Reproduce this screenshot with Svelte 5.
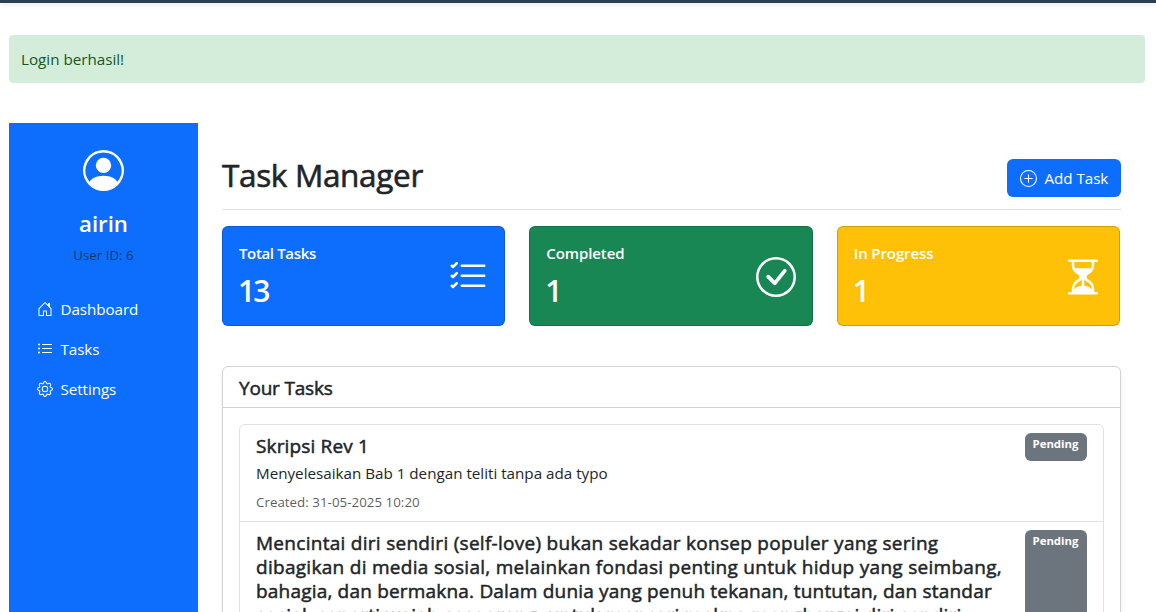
<script>
  const navItems = [
    { label: 'Dashboard', icon: 'house' },
    { label: 'Tasks', icon: 'list' },
    { label: 'Settings', icon: 'gear' }
  ];
  const stats = [
    { label: 'Total Tasks', value: 13, tone: 'blue', icon: 'check2' },
    { label: 'Completed', value: 1, tone: 'green', icon: 'circle' },
    { label: 'In Progress', value: 1, tone: 'yellow', icon: 'hourglass' }
  ];
  const icons = {
    house: ['M8.354 1.146a.5.5 0 0 0-.708 0l-6 6A.5.5 0 0 0 1.5 7.5v7a.5.5 0 0 0 .5.5h4.5a.5.5 0 0 0 .5-.5v-4h2v4a.5.5 0 0 0 .5.5H14a.5.5 0 0 0 .5-.5v-7a.5.5 0 0 0-.146-.354L13 5.793V2.5a.5.5 0 0 0-.5-.5h-1a.5.5 0 0 0-.5.5v1.293zM2.5 14V7.707l5.5-5.5 5.5 5.5V14H10v-4a.5.5 0 0 0-.5-.5h-3a.5.5 0 0 0-.5.5v4z'],
    list: ['M5 11.5a.5.5 0 0 1 .5-.5h9a.5.5 0 0 1 0 1h-9a.5.5 0 0 1-.5-.5m0-4a.5.5 0 0 1 .5-.5h9a.5.5 0 0 1 0 1h-9a.5.5 0 0 1-.5-.5m0-4a.5.5 0 0 1 .5-.5h9a.5.5 0 0 1 0 1h-9a.5.5 0 0 1-.5-.5m-3 1a1 1 0 1 0 0-2 1 1 0 0 0 0 2m0 4a1 1 0 1 0 0-2 1 1 0 0 0 0 2m0 4a1 1 0 1 0 0-2 1 1 0 0 0 0 2'],
    gear: [
      'M8 4.754a3.246 3.246 0 1 0 0 6.492 3.246 3.246 0 0 0 0-6.492M5.754 8a2.246 2.246 0 1 1 4.492 0 2.246 2.246 0 0 1-4.492 0',
      'M9.796 1.343c-.527-1.79-3.065-1.79-3.592 0l-.094.319a.873.873 0 0 1-1.255.52l-.292-.16c-1.64-.892-3.433.902-2.54 2.541l.159.292a.873.873 0 0 1-.52 1.255l-.319.094c-1.79.527-1.79 3.065 0 3.592l.319.094a.873.873 0 0 1 .52 1.255l-.16.292c-.892 1.64.901 3.434 2.541 2.54l.292-.159a.873.873 0 0 1 1.255.52l.094.319c.527 1.79 3.065 1.79 3.592 0l.094-.319a.873.873 0 0 1 1.255-.52l.292.16c1.64.893 3.434-.902 2.54-2.541l-.159-.292a.873.873 0 0 1 .52-1.255l.319-.094c1.79-.527 1.79-3.065 0-3.592l-.319-.094a.873.873 0 0 1-.52-1.255l.16-.292c.893-1.64-.902-3.433-2.541-2.54l-.292.159a.873.873 0 0 1-1.255-.52zm-2.633.283c.246-.835 1.428-.835 1.674 0l.094.319a1.873 1.873 0 0 0 2.693 1.115l.291-.16c.764-.415 1.6.42 1.184 1.185l-.159.292a1.873 1.873 0 0 0 1.116 2.692l.318.094c.835.246.835 1.428 0 1.674l-.319.094a1.873 1.873 0 0 0-1.115 2.693l.16.291c.415.764-.42 1.6-1.185 1.184l-.291-.159a1.873 1.873 0 0 0-2.693 1.116l-.094.318c-.246.835-1.428.835-1.674 0l-.094-.319a1.873 1.873 0 0 0-2.692-1.115l-.292.16c-.764.415-1.6-.42-1.184-1.185l.159-.291A1.873 1.873 0 0 0 1.945 8.93l-.319-.094c-.835-.246-.835-1.428 0-1.674l.319-.094A1.873 1.873 0 0 0 3.06 4.377l-.16-.292c-.415-.764.42-1.6 1.185-1.184l.292.159a1.873 1.873 0 0 0 2.692-1.115z'
    ],
    check2: ['M5 11.5a.5.5 0 0 1 .5-.5h9a.5.5 0 0 1 0 1h-9a.5.5 0 0 1-.5-.5m0-4a.5.5 0 0 1 .5-.5h9a.5.5 0 0 1 0 1h-9a.5.5 0 0 1-.5-.5m0-4a.5.5 0 0 1 .5-.5h9a.5.5 0 0 1 0 1h-9a.5.5 0 0 1-.5-.5M3.854 2.146a.5.5 0 0 1 0 .708l-1.5 1.5a.5.5 0 0 1-.708 0l-.5-.5a.5.5 0 1 1 .708-.708L2 3.293l1.146-1.147a.5.5 0 0 1 .708 0m0 4a.5.5 0 0 1 0 .708l-1.5 1.5a.5.5 0 0 1-.708 0l-.5-.5a.5.5 0 1 1 .708-.708L2 7.293l1.146-1.147a.5.5 0 0 1 .708 0m0 4a.5.5 0 0 1 0 .708l-1.5 1.5a.5.5 0 0 1-.708 0l-.5-.5a.5.5 0 0 1 .708-.708l.146.147 1.146-1.147a.5.5 0 0 1 .708 0'],
    circle: [
      'M8 15A7 7 0 1 1 8 1a7 7 0 0 1 0 14m0 1A8 8 0 1 0 8 0a8 8 0 0 0 0 16',
      'm10.97 4.97-.02.022-3.473 4.425-2.093-2.094a.75.75 0 0 0-1.06 1.06L6.97 11.03a.75.75 0 0 0 1.079-.02l3.992-4.99a.75.75 0 0 0-1.071-1.05'
    ],
    hourglass: ['M2.5 15a.5.5 0 1 1 0-1h1v-1a4.5 4.5 0 0 1 2.557-4.06c.29-.139.443-.377.443-.59v-.7c0-.213-.154-.451-.443-.59A4.5 4.5 0 0 1 3.5 3V2h-1a.5.5 0 0 1 0-1h11a.5.5 0 0 1 0 1h-1v1a4.5 4.5 0 0 1-2.557 4.06c-.29.139-.443.377-.443.59v.7c0 .213.154.451.443.59A4.5 4.5 0 0 1 12.5 13v1h1a.5.5 0 0 1 0 1zm2-13v1c0 .537.12 1.045.337 1.5h6.326c.216-.455.337-.963.337-1.5V2zm3 6.35c0 .701-.478 1.236-1.011 1.492A3.5 3.5 0 0 0 4.5 13s.866-1.299 3-1.48zm1 0v3.17c2.134.181 3 1.48 3 1.48a3.5 3.5 0 0 0-1.989-3.158C8.978 9.586 8.5 9.052 8.5 8.351z'],
    person: [
      'M11 6a3 3 0 1 1-6 0 3 3 0 0 1 6 0',
      'M0 8a8 8 0 1 1 16 0A8 8 0 0 1 0 8m8-7a7 7 0 0 0-5.468 11.37C3.242 11.226 4.805 10 8 10s4.757 1.225 5.468 2.37A7 7 0 0 0 8 1'
    ],
    plus: [
      'M8 15A7 7 0 1 1 8 1a7 7 0 0 1 0 14m0 1A8 8 0 1 0 8 0a8 8 0 0 0 0 16',
      'M8 4a.5.5 0 0 1 .5.5v3h3a.5.5 0 0 1 0 1h-3v3a.5.5 0 0 1-1 0v-3h-3a.5.5 0 0 1 0-1h3v-3A.5.5 0 0 1 8 4'
    ]
  };
</script>

{#snippet icon(name, size)}
  <svg class="icon" width={size} height={size} viewBox="0 0 16 16" fill="currentColor" fill-rule={name === 'person' ? 'evenodd' : 'nonzero'} aria-hidden="true">
    {#each icons[name] as d}<path {d} />{/each}
  </svg>
{/snippet}

<div class="page">
  <div class="topbar"></div>
  <div class="alert">Login berhasil!</div>
  <div class="layout">
    <nav class="sidebar">
      <div class="profile">
        {@render icon('person', 41)}
        <h4>airin</h4>
        <small>User ID: 6</small>
      </div>
      <ul>
        {#each navItems as item}
          <li>{@render icon(item.icon, 16)}<span>{item.label}</span></li>
        {/each}
      </ul>
    </nav>
    <main>
      <header>
        <h1>Task Manager</h1>
        <button>{@render icon('plus', 17)}<span>Add Task</span></button>
      </header>
      <section class="stats">
        {#each stats as s}
          <div class="stat {s.tone}">
            <div class="figures"><h6>{s.label}</h6><strong>{s.value}</strong></div>
            {@render icon(s.icon, 40)}
          </div>
        {/each}
      </section>
      <section class="card">
        <div class="card-head"><h5>Your Tasks</h5></div>
        <div class="list">
          <article>
            <div class="body">
              <h5 class="first">Skripsi Rev 1</h5>
              <p>Menyelesaikan Bab 1 dengan teliti tanpa ada typo</p>
              <small>Created: 31-05-2025 10:20</small>
            </div>
            <span class="badge short">Pending</span>
          </article>
          <article>
            <div class="body">
              <h5 class="long">
                <span class="l1">Mencintai diri sendiri (self-love) bukan sekadar konsep populer yang sering</span>
                <span class="l2">dibagikan di media sosial, melainkan fondasi penting untuk hidup yang seimbang,</span>
                <span class="l3">bahagia, dan bermakna. Dalam dunia yang penuh tekanan, tuntutan, dan standar</span>
                <span class="l4">sosial, seperti wajah seseorang, untuk mencari makna menghargai diri sendiri</span>
              </h5>
            </div>
            <span class="badge">Pending</span>
          </article>
        </div>
      </section>
    </main>
  </div>
</div>

<style>
  :global(body) { margin: 0; background: #fff; overflow: hidden; }
  .page { box-sizing: border-box; width: 1156px; height: 612px; overflow: hidden; font: 15.2px/24px "Open Sans", "Noto Sans", sans-serif; color: #212529; }
  .icon { display: block; flex: none; }
  h1, h4, h5, h6, p, ul { margin: 0; padding: 0; }
  .topbar { height: 3px; background: #2c3e50; box-shadow: 0 2px 4px rgba(0, 0, 0, .1); }
  .alert { box-sizing: border-box; height: 48px; margin: 32px 11px 40px 9px; padding: 12px; border-radius: 4px; background: #d4edda; color: #155724; }
  .layout { display: flex; margin-left: 9px; }
  .sidebar { width: 189px; height: 620px; flex: none; background: #0d6efd; color: #fff; }
  .profile { display: flex; flex-direction: column; align-items: center; padding-top: 26.5px; }
  h4 { margin-top: 18px; font-size: 22.2px; line-height: 29px; font-weight: 600; }
  .profile small { margin-top: 7.5px; color: rgba(33, 37, 41, .75); }
  small { display: block; font-size: 13.3px; line-height: 21px; }
  ul { list-style: none; margin-top: 23px; }
  li { display: flex; align-items: center; height: 40px; padding-left: 28px; gap: 7.5px; letter-spacing: -.07px; }
  main { width: 899px; margin-left: 24px; }
  header { display: flex; justify-content: space-between; align-items: flex-start; box-sizing: border-box; height: 87px; padding-top: 36px; border-bottom: 1px solid #dee2e6; }
  h1 { margin-top: -3px; font-size: 31.5px; line-height: 38px; font-weight: 400; letter-spacing: -.33px; -webkit-text-stroke: .6px currentColor; }
  button { display: flex; align-items: center; gap: 8px; box-sizing: border-box; width: 114px; height: 38px; padding: 0 12.5px; border: 0; border-radius: 6px; background: #0d6efd; color: #fff; font: inherit; letter-spacing: -.05px; white-space: nowrap; }
  .stats { display: grid; grid-template-columns: repeat(3, 1fr); gap: 24px; width: 898px; margin-top: 16px; }
  .stat { display: flex; justify-content: space-between; align-items: center; box-sizing: border-box; height: 100px; padding: 2px 16px 0; border: 1px solid rgba(0, 0, 0, .175); border-radius: 6px; color: #fff; }
  .blue { background-color: #0d6efd; }
  .green { background-color: #198754; }
  .yellow { background-color: #ffc107; }
  h6 { margin-top: -1px; font-size: 15px; line-height: 19px; font-weight: 600; letter-spacing: -.1px; }
  .blue h6 { letter-spacing: -.35px; }
  strong { display: block; margin-top: 9px; font-size: 30px; line-height: 38px; font-weight: 600; letter-spacing: -2px; text-indent: -1px; }
  .card { height: 300px; margin-top: 40px; border: 1px solid #d3d3d4; border-radius: 6px; box-shadow: 0 2px 4px rgba(0, 0, 0, .075); }
  .card-head { padding: 9px 16px 7px; border-bottom: 1px solid #d3d3d4; }
  h5 { font-size: 19px; line-height: 24px; font-weight: 400; letter-spacing: -.2px; -webkit-text-stroke: .5px currentColor; }
  .list { margin: 16px; border: 1px solid #dee2e6; border-radius: 6px; }
  article { display: flex; justify-content: space-between; align-items: stretch; box-sizing: border-box; padding: 8px 16px; }
  article + article { border-top: 1px solid #dee2e6; }
  article:first-child { height: 96px; }
  .body { padding-top: 1px; }
  p { margin: 3px 0 4px; white-space: nowrap; }
  .body small { margin-top: 7px; color: rgba(33, 37, 41, .75); letter-spacing: .04px; }
  .long { width: 750px; }
  .long span { display: block; width: max-content; white-space: nowrap; }
  .first { letter-spacing: .15px; }
  .l1 { letter-spacing: .28px; }
  .l2 { letter-spacing: .29px; }
  .l3 { letter-spacing: .19px; }
  .l4 { letter-spacing: .23px; }
  .badge { flex: none; box-sizing: border-box; width: 62px; padding: 5px 1px 5px 0; border-radius: 6px; background: #6c757d; color: #fff; text-align: center; font-size: 11.4px; line-height: 12px; font-weight: 700; }
  .short { height: 28px; }
</style>
